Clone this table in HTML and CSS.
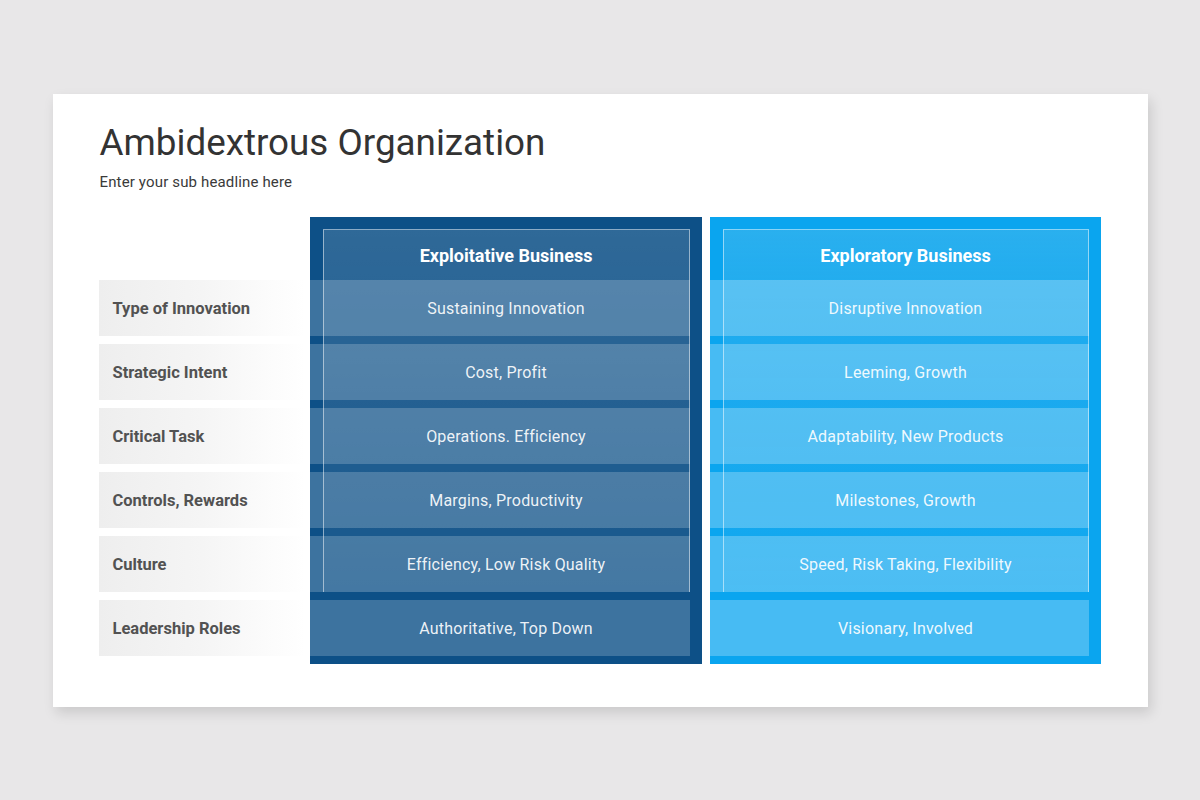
FILE: index.html
```html
<!DOCTYPE html>
<html lang="en">
<head>
<meta charset="utf-8">
<title>Ambidextrous Organization</title>
<link rel="stylesheet" href="styles.css">
</head>
<body>
<div class="slide">
  <h1 class="title">Ambidextrous Organization</h1>
  <p class="subtitle">Enter your sub headline here</p>
  <div class="table">
    <div class="labels">
      <div class="label">Type of Innovation</div>
      <div class="label">Strategic Intent</div>
      <div class="label">Critical Task</div>
      <div class="label">Controls, Rewards</div>
      <div class="label">Culture</div>
      <div class="label">Leadership Roles</div>
    </div>
    <div class="col col-dark">
      <div class="frame"></div>
      <div class="head">Exploitative Business</div>
      <div class="cell">Sustaining Innovation</div>
      <div class="cell">Cost, Profit</div>
      <div class="cell">Operations. Efficiency</div>
      <div class="cell">Margins, Productivity</div>
      <div class="cell">Efficiency, Low Risk Quality</div>
      <div class="cell">Authoritative, Top Down</div>
    </div>
    <div class="col col-light">
      <div class="frame"></div>
      <div class="head">Exploratory Business</div>
      <div class="cell">Disruptive Innovation</div>
      <div class="cell">Leeming, Growth</div>
      <div class="cell">Adaptability, New Products</div>
      <div class="cell">Milestones, Growth</div>
      <div class="cell">Speed, Risk Taking, Flexibility</div>
      <div class="cell">Visionary, Involved</div>
    </div>
  </div>
</div>
</body>
</html>
```
FILE: styles.css
```css
* { box-sizing: border-box; }
html, body { margin: 0; padding: 0; }
body {
  background: #e8e7e8;
  height: 800px;
  display: flex;
  align-items: center;
  justify-content: center;
  font-family: Roboto, "Liberation Sans", sans-serif;
}
.slide {
  width: 1095px;
  height: 613px;
  background: #ffffff;
  box-shadow: 3px 6px 12px rgba(0,0,0,0.13);
  padding: 26px 47px 0 46px;
}
.title {
  margin: 0 0 0 1px;
  font-size: 36.8px;
  font-weight: 400;
  color: #333333;
  line-height: 46px;
}
.subtitle {
  margin: 7px 0 0 1px;
  font-size: 15px;
  letter-spacing: 0.15px;
  color: #3a3a3a;
  line-height: 18px;
}
.table {
  margin-top: 26px;
  display: grid;
  grid-template-columns: 211px 392px 399px;
  column-gap: 0;
}
.labels {
  padding-top: 63px;
  display: flex;
  flex-direction: column;
  gap: 8px;
}
.label {
  width: 206px;
  height: 56px;
  display: flex;
  align-items: center;
  padding: 2px 0 0 14px;
  font-size: 16.5px;
  font-weight: 700;
  color: #525252;
  background: linear-gradient(to right, #eeeeee 0%, #f5f5f5 50%, #ffffff 100%);
}
.col {
  position: relative;
  padding: 12px 12px 8px 0;
  display: flex;
  flex-direction: column;
  gap: 8px;
  height: 447px;
}
.col-dark { background: #0d5087; }
.col-light { background: #0aa5ef; margin-left: 8px; }
.frame {
  position: absolute;
  left: 13px;
  right: 12px;
  top: 12px;
  height: 363px;
  border: 1px solid rgba(255,255,255,0.5);
  border-bottom: none;
  background: linear-gradient(to bottom, rgba(255,255,255,0.14), rgba(255,255,255,0.12) 20%, rgba(255,255,255,0.04) 100%);
}
.col-light .frame {
  background: linear-gradient(to bottom, rgba(180,220,235,0.19), rgba(180,220,235,0.12) 20%, rgba(180,220,235,0.04) 100%);
}
.head {
  position: relative;
  height: 51px;
  margin-bottom: -8px;
  display: flex;
  align-items: center;
  justify-content: center;
  padding: 2px 0 0 13px;
  font-size: 18px;
  font-weight: 700;
  color: #ffffff;
}
.cell {
  position: relative;
  height: 56px;
  display: flex;
  align-items: center;
  justify-content: center;
  padding: 2px 0 0 13px;
  font-size: 16px;
  letter-spacing: 0.2px;
  color: rgba(255,255,255,0.92);
  background: rgba(255,255,255,0.2);
}
.col-light .cell { background: rgba(255,255,255,0.25); }
```
